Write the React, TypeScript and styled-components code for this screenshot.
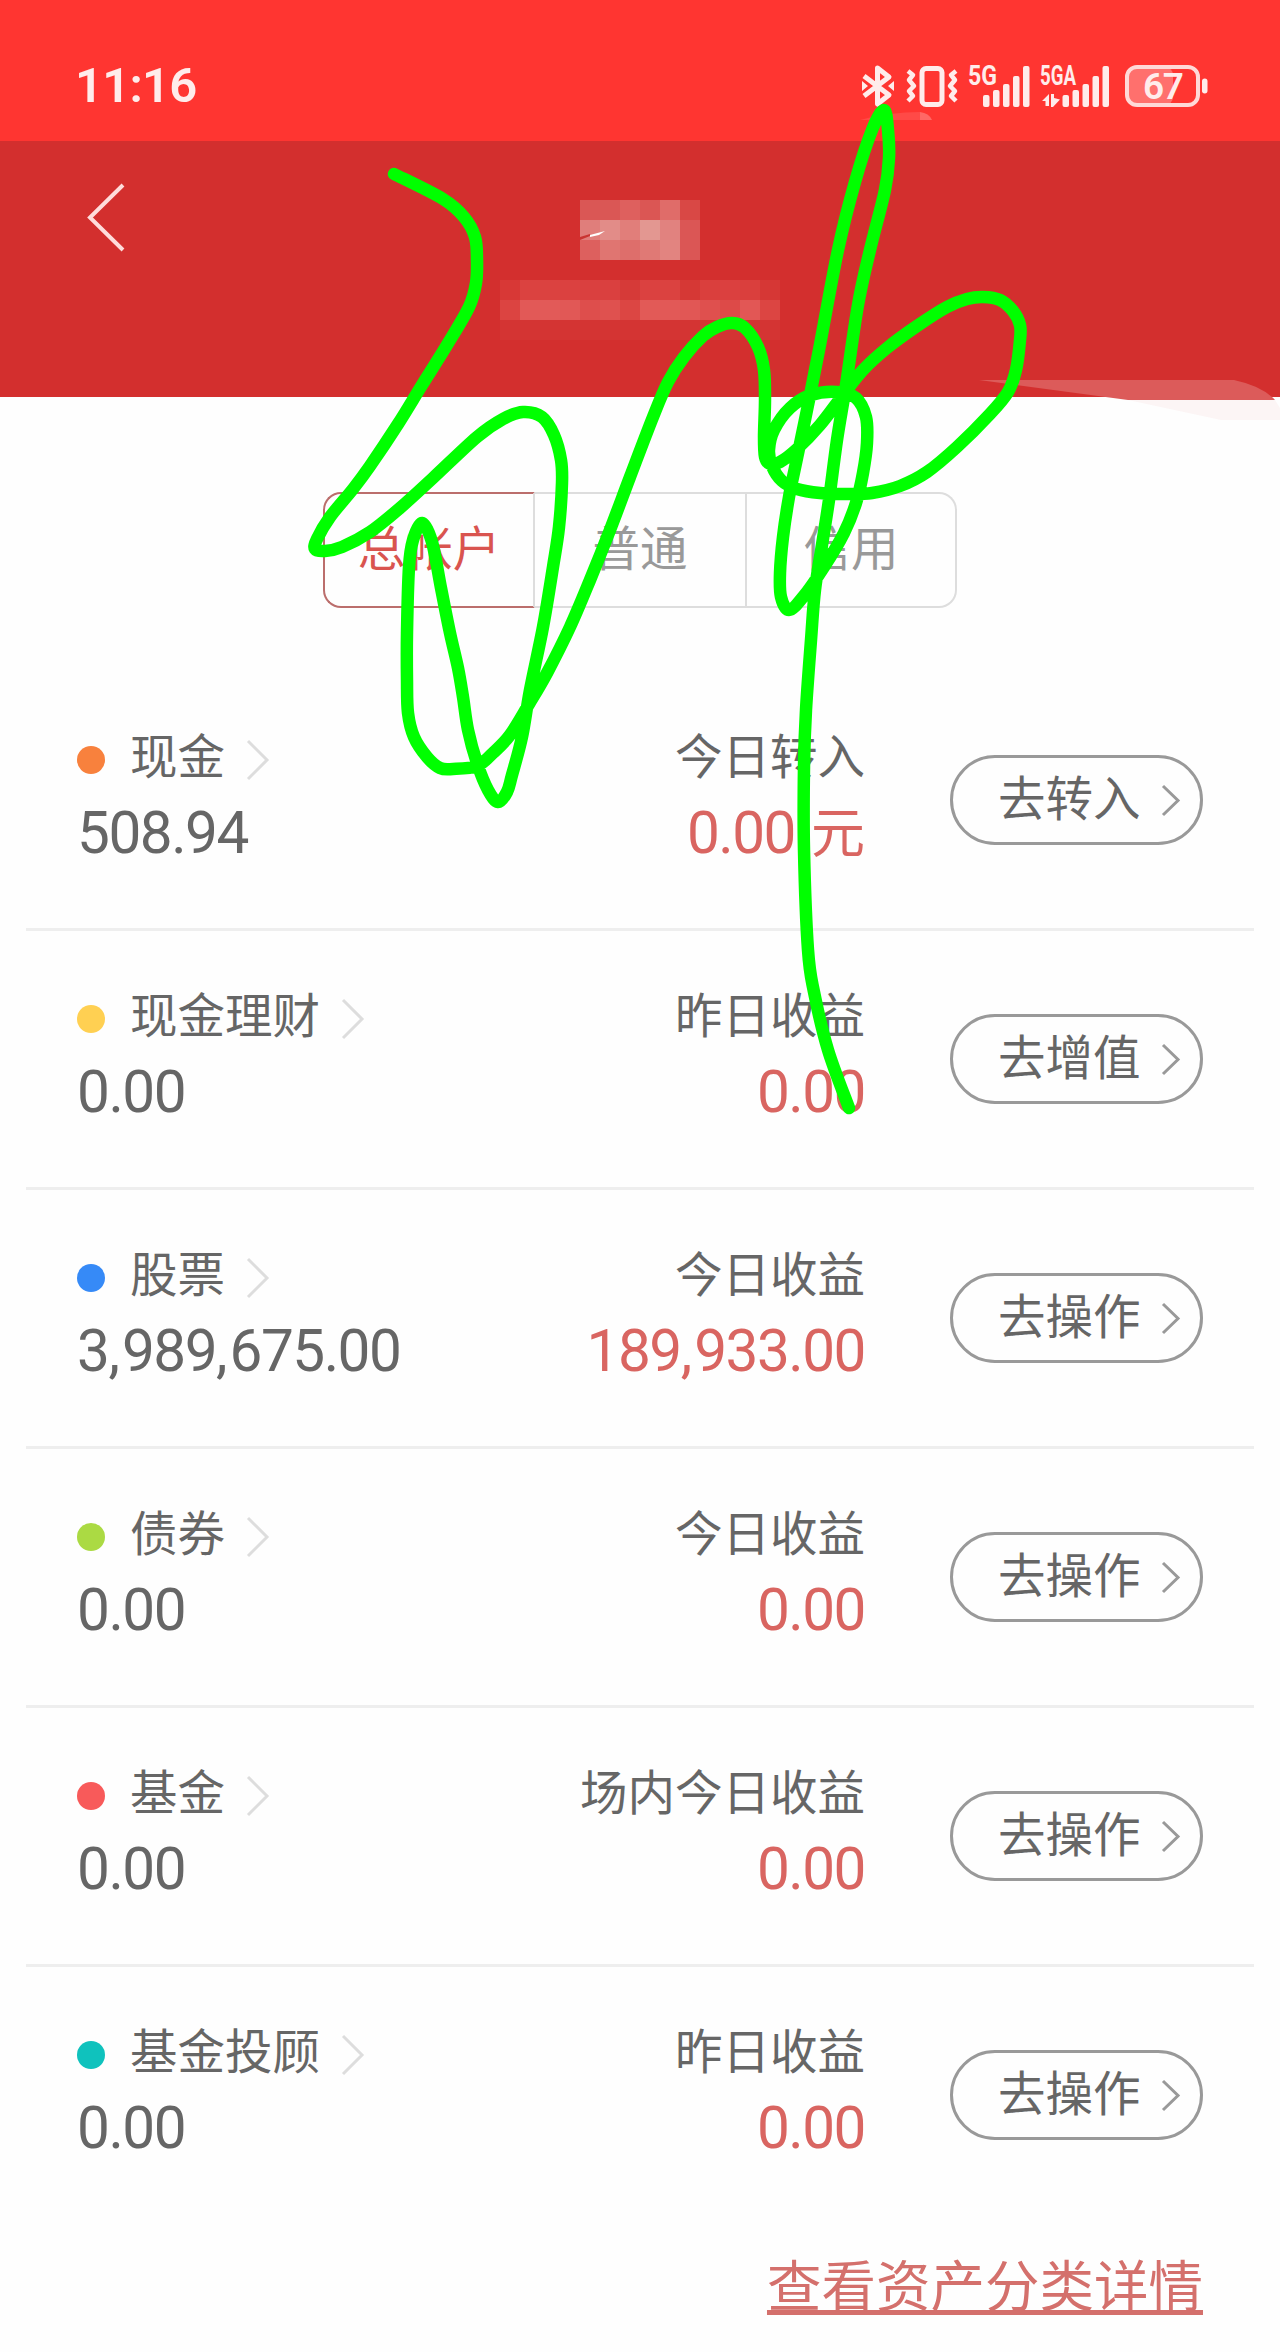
import React from "react";
import styled, { createGlobalStyle } from "styled-components";

const GlobalStyle = createGlobalStyle`
    * {
        box-sizing: border-box;
    }

    body {
        margin: 0;
        background: #fefefe;
        font-family: Roboto, "Noto Sans CJK SC", sans-serif;
        color: #666;
    }

    button {
        font-family: inherit;
        background: none;
        padding: 0;
        border: 0;
    }
`;

const Page = styled.main`
    position: relative;
    width: 1280px;
    height: 2352px;
    overflow: hidden;
    background: #fefefe;
`;

//////////////////////////////////// Status bar
const StatusBar = styled.div`
    display: flex;
    justify-content: space-between;
    align-items: flex-start;
    height: 141px;
    padding: 60px 70px 0 75px;
    background: #ff3531;
`;

const Clock = styled.span`
    font-size: 49px;
    line-height: 52px;
    font-weight: 600;
    letter-spacing: -0.8px;
    color: #ffeceb;
`;

const StatusIcons = styled.svg`
    display: block;
    width: 350px;
    height: 52px;
`;

//////////////////////////////////// Header
const Header = styled.header`
    display: grid;
    grid-template-columns: 500px 280px 500px;
    align-items: start;
    height: 256px;
    background: #d32f2e;
`;

const BackButton = styled.button`
    display: flex;
    width: 60px;
    height: 80px;
    margin: 37px 0 0 76px;
`;

const Account = styled.div`
    display: flex;
    flex-direction: column;
    align-items: center;
    gap: 20px;
    padding-top: 59px;
`;

const Mosaic = styled.div<{ $cols: number }>`
    display: grid;
    grid-template-columns: repeat(${(p) => p.$cols}, 20px);
    grid-auto-rows: 20px;
`;

const Cell = styled.i<{ $color: string }>`
    background: ${(p) => p.$color};
`;

//////////////////////////////////// Tabs
const Tabs = styled.nav`
    display: flex;
    width: 634px;
    height: 116px;
    margin: 95px 0 0 323px;
`;

const Tab = styled.button<{ $active?: boolean }>`
    width: 212px;
    font-size: 47.5px;
    line-height: 60px;
    color: ${(p) => (p.$active ? "#d9544f" : "#999")};
    border: 2px solid ${(p) => (p.$active ? "#bb6e6c" : "#ddd")};
    border-left-width: ${(p) => (p.$active ? "2px" : "0")};
    border-right-color: #ddd;

    &:first-child {
        border-radius: 18px 0 0 18px;
    }

    &:last-child {
        width: 210px;
        border-radius: 0 18px 18px 0;
    }
`;

//////////////////////////////////// Asset list
const List = styled.section`
    margin: 64px 26px 0;
`;

const Row = styled.div`
    display: flex;
    align-items: flex-start;
    height: 259px;
    padding: 51px 51px 0;
    border-bottom: 3px solid #eee;

    &:last-child {
        border-bottom-color: transparent;
    }
`;

const Left = styled.div`
    flex: 1;
`;

const Right = styled.div`
    text-align: right;
`;

const Label = styled.div`
    display: flex;
    align-items: center;
    justify-content: flex-start;
    height: 60px;
    font-size: 47.5px;
    line-height: 60px;
`;

const RightLabel = styled(Label)`
    justify-content: flex-end;
`;

const LabelText = styled.span`
    padding-top: 9px;
`;

const Dot = styled.i<{ $color: string }>`
    width: 28px;
    height: 28px;
    margin: 14px 25px 0 0;
    border-radius: 50%;
    background: ${(p) => p.$color};
`;

const LabelArrow = styled.svg`
    width: 24px;
    height: 42px;
    margin: 14px 0 0 21px;
`;

const Value = styled.div<{ $red?: boolean }>`
    height: 70px;
    margin-top: 15px;
    font-size: 58.5px;
    line-height: 70px;
    letter-spacing: -1.5px;
    white-space: nowrap;
    color: ${(p) => (p.$red ? "#d96561" : "#666")};
`;

const Comma = styled.span`
    margin-right: 3.5px;
`;

const Unit = styled.span`
    margin-left: 16px;
    font-size: 54px;
    letter-spacing: 0;
`;

const ActionButton = styled.button`
    display: flex;
    align-items: center;
    width: 253px;
    height: 90px;
    margin: 32px 0 0 85px;
    padding: 0 0 0 45px;
    border: 3px solid #999;
    border-radius: 45px;
    font-size: 47.5px;
    line-height: 60px;
    white-space: nowrap;
    color: #666;
`;

const ActionText = styled.span`
    margin-top: -1px;
`;

const ActionArrow = styled.svg`
    flex: none;
    width: 20px;
    height: 34px;
    margin-left: 20px;
`;

const DetailLink = styled.a`
    display: block;
    margin: 26px 77px 0 0;
    text-align: right;
    font-size: 54.5px;
    line-height: 70px;
    color: #d4706c;
    text-decoration: underline;
    text-decoration-thickness: 5px;
    text-underline-offset: 4px;
    text-decoration-skip-ink: none;
`;

// Handwriting drawn over the whole page
const Overlay = styled.svg`
    position: absolute;
    top: 0;
    left: 0;
    width: 1280px;
    height: 2352px;
    pointer-events: none;
`;
////////////////////////////////////

const nameCells = [
    "#da5755", "#da5755", "#de605e", "#db5654", "#e06c69", "#d94845",
    "#e07e7b", "#e28c88", "#e17e7a", "#e39791", "#e1827f", "#db5655",
    "#dd605e", "#e07571", "#de6e6b", "#e07975", "#e28480", "#db5655",
];

const numberCells = [
    "#d83836", "#db4240", "#db4240", "#db4140", "#da403f", "#da403f", "#d63a38",
    "#db4140", "#db4240", "#d63835", "#da3f3d", "#db403f", "#da3f3d", "#d63735",
    "#dc4441", "#e25957", "#e25a58", "#e15856", "#de4e4c", "#df514f", "#dc4643",
    "#e25a57", "#e25957", "#e15755", "#df504e", "#dd4a48", "#e25755", "#dc4542",
    ...Array(14).fill("#d43433"),
];

const assets = [
    { name: "现金", color: "#f8813d", value: "508.94", label: "今日转入", profit: "0.00", unit: "元", action: "去转入" },
    { name: "现金理财", color: "#ffd052", value: "0.00", label: "昨日收益", profit: "0.00", action: "去增值" },
    { name: "股票", color: "#368af7", value: "3,989,675.00", label: "今日收益", profit: "189,933.00", action: "去操作" },
    { name: "债券", color: "#abda43", value: "0.00", label: "今日收益", profit: "0.00", action: "去操作" },
    { name: "基金", color: "#f85a5a", value: "0.00", label: "场内今日收益", profit: "0.00", action: "去操作" },
    { name: "基金投顾", color: "#0fc2bd", value: "0.00", label: "昨日收益", profit: "0.00", action: "去操作" },
];

const strokePoints: [number, number][] = [
    [394, 174], [443, 199], [464, 217], [475, 237], [477, 260], [476, 283], [469, 307], [447, 345], [422, 385], [398, 424],
    [370, 466], [353, 489], [330, 517], [317, 539], [315, 549], [325, 551], [342, 547], [370, 532], [400, 508], [433, 478],
    [477, 437], [503, 419], [523, 412], [542, 417], [554, 435], [561, 460], [562, 483], [559, 527], [553, 567], [543, 627],
    [530, 690], [522, 737], [512, 775], [507, 792], [498, 802], [488, 790], [477, 763], [468, 730], [463, 697], [458, 668],
    [450, 633], [441, 588], [432, 542], [422, 523], [413, 540], [409, 567], [407, 633], [407, 680], [408, 713], [414, 737],
    [427, 757], [440, 768], [453, 769], [477, 766], [493, 753], [510, 735], [529, 704], [547, 673], [570, 627], [590, 580],
    [610, 530], [630, 477], [653, 417], [668, 382], [684, 357], [703, 336], [717, 327], [732, 323], [745, 328], [758, 347],
    [764, 370], [765, 400], [764, 437], [765, 457], [770, 464], [780, 462], [797, 449], [820, 425], [843, 395], [863, 370],
    [887, 348], [917, 326], [947, 307], [967, 299], [983, 297], [1000, 300], [1013, 311], [1020, 325], [1020, 340], [1016, 370],
    [1008, 392], [990, 414], [957, 447], [927, 472], [900, 486], [872, 493], [847, 494], [820, 493], [797, 489], [782, 481],
    [772, 466], [769, 450], [774, 430], [790, 408], [811, 395], [837, 392], [856, 398], [866, 417], [867, 443], [863, 473],
    [856, 503], [844, 533], [824, 567], [803, 597], [789, 610], [781, 597], [780, 573], [783, 537], [789, 497], [796, 463],
    [807, 410], [819, 350], [838, 250], [855, 182], [872, 130], [884, 110], [888, 130], [889, 158], [885, 190], [870, 250],
    [858, 305], [846, 385], [837, 440], [829, 500], [822, 545], [815, 590], [811, 640], [806, 710], [804, 767], [804, 850],
    [808, 950], [814, 992], [828, 1050], [849, 1108],
];

// Catmull-Rom spline through the points
function splinePath(pts: [number, number][]) {
    let d = `M${pts[0][0]} ${pts[0][1]}`;
    for (let i = 0; i < pts.length - 1; i++) {
        const a = pts[i - 1] || pts[i];
        const b = pts[i];
        const c = pts[i + 1];
        const e = pts[i + 2] || c;
        d += ` C${b[0] + (c[0] - a[0]) / 6} ${b[1] + (c[1] - a[1]) / 6} ${c[0] - (e[0] - b[0]) / 6} ${c[1] - (e[1] - b[1]) / 6} ${c[0]} ${c[1]}`;
    }
    return d;
}

function SignalBars({ x }: { x: number }) {
    const tops = [35, 30, 24, 16, 6];
    return (
        <g>
            {tops.map((top, i) => (
                <rect key={i} x={x + i * 10} y={top} width="6.5" height={47 - top} rx="2" />
            ))}
        </g>
    );
}

function PhoneStatus() {
    return (
        <StatusBar>
            <Clock>11:16</Clock>
            <StatusIcons viewBox="0 0 350 52" fill="#ffeceb">
                {/* bluetooth */}
                <path
                    d="M4 16 L29 35 L17.5 44 V8 L29 17 L4 36"
                    fill="none"
                    stroke="#ffeceb"
                    strokeWidth="5"
                    strokeLinejoin="round"
                />
                <path d="M2 21 L8 26 L2 31 Z M34 21 L28 26 L34 31 Z" />
                {/* vibrate */}
                <g fill="none" stroke="#ffeceb" strokeWidth="4.5" strokeLinejoin="round">
                    <rect x="62" y="8.5" width="20" height="36" rx="4" strokeWidth="5" />
                    <path d="M48 11 L53 15 L49 20 L54 26 L49 31 L53 36 L48 41" />
                    <path d="M96 11 L91 15 L95 20 L90 26 L95 31 L91 36 L96 41" />
                </g>
                <text x="108" y="25" fontFamily="Roboto" fontWeight="700" fontSize="27" textLength="29" lengthAdjust="spacingAndGlyphs">5G</text>
                <SignalBars x={123} />
                <text x="180" y="25" fontFamily="Roboto" fontWeight="700" fontSize="27" textLength="36" lengthAdjust="spacingAndGlyphs">5GA</text>
                <path d="M182 41 L189 34 V46 H185.5 V41 Z M191 34 H194 V38 L200 39.5 L193 47 H191 Z" />
                <SignalBars x={202.5} />
                {/* battery */}
                <rect x="267" y="7" width="46" height="38" rx="8" fillOpacity="0.32" />
                <rect x="267" y="7" width="71" height="38" rx="10" fill="none" stroke="#ffd9d7" strokeWidth="4" />
                <rect x="342" y="18.5" width="5.5" height="15" rx="2.7" />
                <text x="283" y="39" fontFamily="Roboto" fontWeight="600" fontSize="37" textLength="41">67</text>
            </StatusIcons>
        </StatusBar>
    );
}

function Amount({ text }: { text: string }) {
    const parts = text.split(",");
    return (
        <>
            {parts.map((part, i) => (
                <React.Fragment key={i}>
                    {i > 0 && <Comma>,</Comma>}
                    {part}
                </React.Fragment>
            ))}
        </>
    );
}

interface AssetProps {
    name: string;
    color: string;
    value: string;
    label: string;
    profit: string;
    unit?: string;
    action: string;
}

function AssetRow({ name, color, value, label, profit, unit, action }: AssetProps) {
    return (
        <Row>
            <Left>
                <Label>
                    <Dot $color={color} />
                    <LabelText>{name}</LabelText>
                    <LabelArrow viewBox="0 0 24 42" fill="none" stroke="#ddd" strokeWidth="3">
                        <path d="M2 2 L21 21 L2 40" />
                    </LabelArrow>
                </Label>
                <Value><Amount text={value} /></Value>
            </Left>
            <Right>
                <RightLabel>
                    <LabelText>{label}</LabelText>
                </RightLabel>
                <Value $red>
                    <Amount text={profit} />
                    {unit && <Unit>{unit}</Unit>}
                </Value>
            </Right>
            <ActionButton>
                <ActionText>{action}</ActionText>
                <ActionArrow viewBox="0 0 20 34" fill="none" stroke="#999" strokeWidth="3">
                    <path d="M2 3 L17 17.5 L2 32" />
                </ActionArrow>
            </ActionButton>
        </Row>
    );
}

export default function App() {
    return (
        <Page>
            <GlobalStyle />
            <PhoneStatus />
            <Header>
                <BackButton>
                    <svg width="60" height="80" viewBox="0 0 60 80" fill="none" stroke="#ffdcdb" strokeWidth="4">
                        <path d="M47 7 L14 39.5 L47 72" />
                    </svg>
                </BackButton>
                <Account>
                    <Mosaic $cols={6}>
                        {nameCells.map((c, i) => <Cell key={i} $color={c} />)}
                    </Mosaic>
                    <Mosaic $cols={14}>
                        {numberCells.map((c, i) => <Cell key={i} $color={c} />)}
                    </Mosaic>
                </Account>
            </Header>
            <Tabs>
                <Tab $active>总帐户</Tab>
                <Tab>普通</Tab>
                <Tab>信用</Tab>
            </Tabs>
            <List>
                {assets.map((a) => <AssetRow key={a.name} {...a} />)}
            </List>
            <DetailLink>查看资产分类详情</DetailLink>
            <Overlay viewBox="0 0 1280 2352">
                <path d="M979 380 H1234 Q1262 386 1275 400 H1128 Z" fill="#dc5b5a" />
                <path d="M1128 400 H1275 L1280 408 V420 H1221 Z" fill="#fcf5f5" />
                <path d="M860 120 Q890 112 920 112 V120 Z" fill="#ff4a47" />
                <path d="M920 112 Q929 113 932 120 H920 Z" fill="#ff6865" />
                <path d="M580 237 L590 234 L590 236 L580 240 Z" fill="#c93431" />
                <path d="M590 235 L605 231 L599 235 L590 237 Z" fill="#fff" />
                <path
                    d={splinePath(strokePoints)}
                    fill="none"
                    stroke="#00ff00"
                    strokeWidth="12.5"
                    strokeLinecap="round"
                    strokeLinejoin="round"
                />
            </Overlay>
        </Page>
    );
}
